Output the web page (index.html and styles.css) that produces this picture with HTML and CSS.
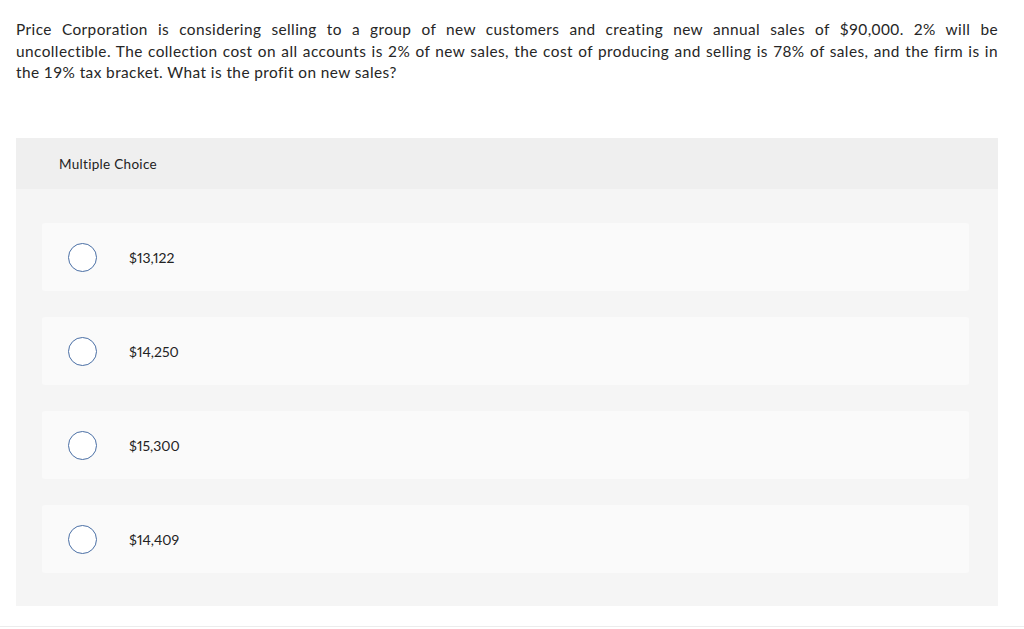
FILE: index.html
```html
<!DOCTYPE html>
<html>
<head>
<meta charset="utf-8">
<link rel="stylesheet" href="styles.css">
</head>
<body>
<div class="page">
  <p class="question"><span class="line">Price Corporation is considering selling to a group of new customers and creating new annual sales of $90,000. 2% will be</span> <span class="line">uncollectible. The collection cost on all accounts is 2% of new sales, the cost of producing and selling is 78% of sales, and the firm is in</span> <span class="line last">the 19% tax bracket. What is the profit on new sales?</span></p>
  <section class="panel">
    <div class="panel-head">Multiple Choice</div>
    <div class="panel-body">
      <div class="choice"><span class="radio"></span><span class="label">$13,122</span></div>
      <div class="choice"><span class="radio"></span><span class="label">$14,250</span></div>
      <div class="choice"><span class="radio"></span><span class="label">$15,300</span></div>
      <div class="choice"><span class="radio"></span><span class="label">$14,409</span></div>
    </div>
  </section>
</div>
</body>
</html>
```
FILE: styles.css
```css
html, body {
  margin: 0;
  padding: 0;
  background: #fff;
}
body {
  font-family: "Lato", "Open Sans", "Liberation Sans", sans-serif;
  color: #262626;
}
.page {
  padding: 19px 26px 20px 16px;
  border-bottom: 1px solid #ececec;
}
.question {
  margin: 0 0 54px 0;
  font-size: 15.4px;
  line-height: 21.7px;
  letter-spacing: 0.42px;
}
.line {
  display: block;
  white-space: nowrap;
  text-align: justify;
  text-align-last: justify;
}
.line.last {
  text-align-last: left;
}
.panel {
  background: #f5f5f5;
}
.panel-head {
  background: #efefef;
  height: 51px;
  display: flex;
  align-items: center;
  padding-left: 43px;
  font-size: 13.5px;
  letter-spacing: 0.3px;
  color: #222;
}
.panel-body {
  display: flex;
  flex-direction: column;
  gap: 26px;
  padding: 34px 29px 33px 26px;
}
.choice {
  height: 68px;
  background: #fafafa;
  border-radius: 3px;
  display: flex;
  align-items: center;
  padding-left: 26px;
}
.radio {
  width: 27px;
  height: 27px;
  border: 1.2px solid #4a6fa5;
  border-radius: 50%;
  background: #fff;
  flex: none;
}
.label {
  margin-left: 32px;
  font-size: 14px;
  font-variant-numeric: proportional-nums;
  color: #222;
}
```
